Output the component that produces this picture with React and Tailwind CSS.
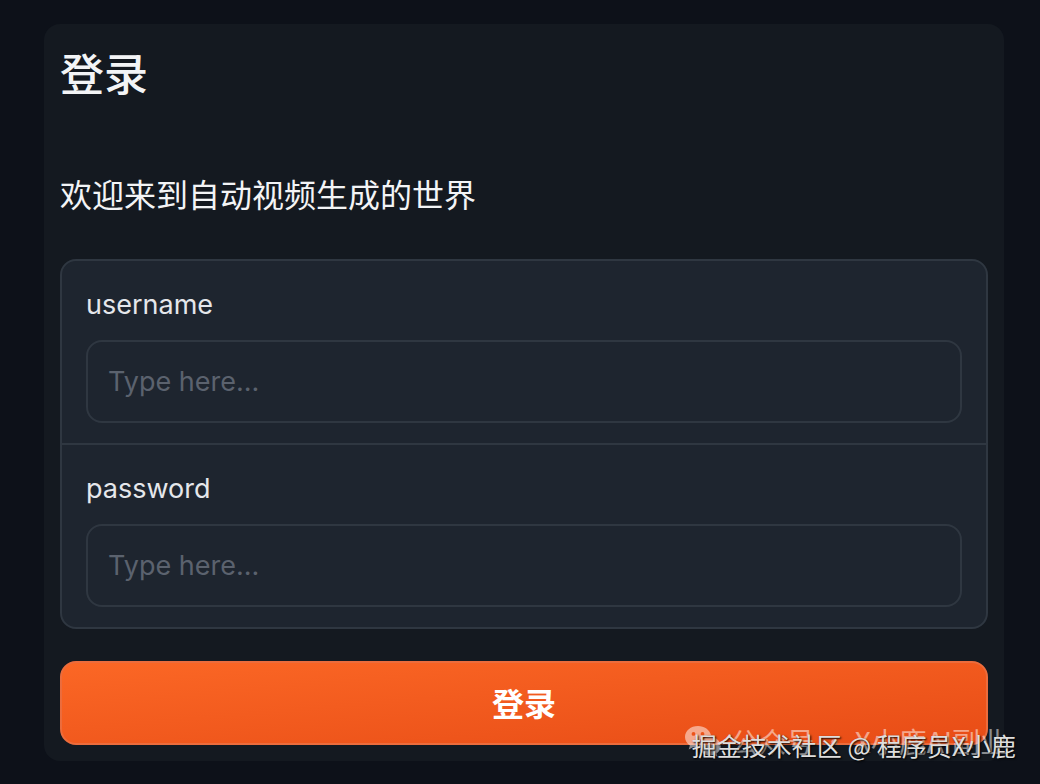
import { useState } from "react";

const fields = [
  { name: "username", type: "text" },
  { name: "password", type: "password" },
];

function WechatIcon() {
  return (
    <svg viewBox="0 0 38 32" className="h-8 w-[38px]" fill="currentColor" aria-hidden="true">
      <path
        fillRule="evenodd"
        d="M14 1C6.800 1 1 5.900 1 12c0 3.500 1.900 6.500 4.900 8.500L4.700 24.500l4.700-2.400c1.500.4 3 .6 4.800.6C13 16 18 10.500 27 10.200 25.700 4.900 20.400 1 14 1ZM9.500 7a1.900 1.900 0 1 1 0 3.800a1.900 1.900 0 0 1 0-3.800ZM18.500 7a1.900 1.900 0 1 1 0 3.800a1.900 1.900 0 0 1 0-3.800Z"
      />
      <path
        fillRule="evenodd"
        d="M26 12c-6 0-10.800 4.100-10.800 9.200S20 30.400 26 30.400c1.400 0 2.600-.2 3.800-.6l3.600 1.900-.9-3.300c2.600-1.700 4.300-4.300 4.300-7.200C36.800 16.100 32 12 26 12ZM22.500 16.800a1.500 1.500 0 1 1 0 3a1.500 1.500 0 0 1 0-3ZM29.800 16.800a1.500 1.500 0 1 1 0 3a1.500 1.500 0 0 1 0-3Z"
      />
    </svg>
  );
}

export default function App() {
  const [values, setValues] = useState({ username: "", password: "" });

  const handleChange = (e) => {
    setValues((prev) => ({ ...prev, [e.target.name]: e.target.value }));
  };

  return (
    <div className="relative min-h-screen overflow-hidden bg-[#0d1119] py-6 pr-9 pl-11 font-['Inter','Noto_Sans_CJK_SC',sans-serif] text-[#f3f4f6]">
      <form
        onSubmit={(e) => e.preventDefault()}
        className="rounded-2xl bg-[#141920] px-4 pt-5 pb-4"
      >
        <h1 className="text-[44px] leading-[62px] font-medium">登录</h1>
        <p className="mt-16 text-[32px] leading-[52px]">欢迎来到自动视频生成的世界</p>

        <div className="mt-[37px] divide-y-2 divide-[#2f3741] rounded-2xl border-2 border-[#2f3741] bg-[#1e252f]">
          {fields.map((field) => (
            <div key={field.name} className="px-6 py-5">
              <label
                htmlFor={field.name}
                className="block pb-3 text-[27px] leading-[47px] text-[#e5e7eb]"
              >
                {field.name}
              </label>
              <input
                id={field.name}
                name={field.name}
                type={field.type}
                value={values[field.name]}
                onChange={handleChange}
                placeholder="Type here..."
                className="block h-[83px] w-full rounded-2xl border-2 border-[#2f3741] bg-[#1e252f] px-5 text-[27px] outline-none placeholder:text-[#5b626e] focus:border-orange-500"
              />
            </div>
          ))}
        </div>

        <button
          type="submit"
          className="mt-8 h-[84px] w-full rounded-2xl border-2 border-[#ec6c3c] bg-linear-to-br from-[#fb6725] to-[#e84c16] pt-1 text-[32px] font-bold text-white"
        >
          登录
        </button>
      </form>

      {/* Watermarks */}
      <div className="pointer-events-none absolute right-8 bottom-7 flex items-center gap-2 font-['Noto_Sans_CJK_SC',sans-serif] text-[28px] leading-8 whitespace-nowrap text-white/50">
        <WechatIcon />
        <span>公众号 · X小鹿AI副业</span>
      </div>
      <div className="pointer-events-none absolute right-6 bottom-6 font-['Noto_Sans_CJK_SC',sans-serif] text-[25px] leading-8 whitespace-nowrap text-[#dedede] text-shadow-[1px_1px_2px_#000000]">
        掘金技术社区 @ 程序员X小鹿
      </div>
    </div>
  );
}
